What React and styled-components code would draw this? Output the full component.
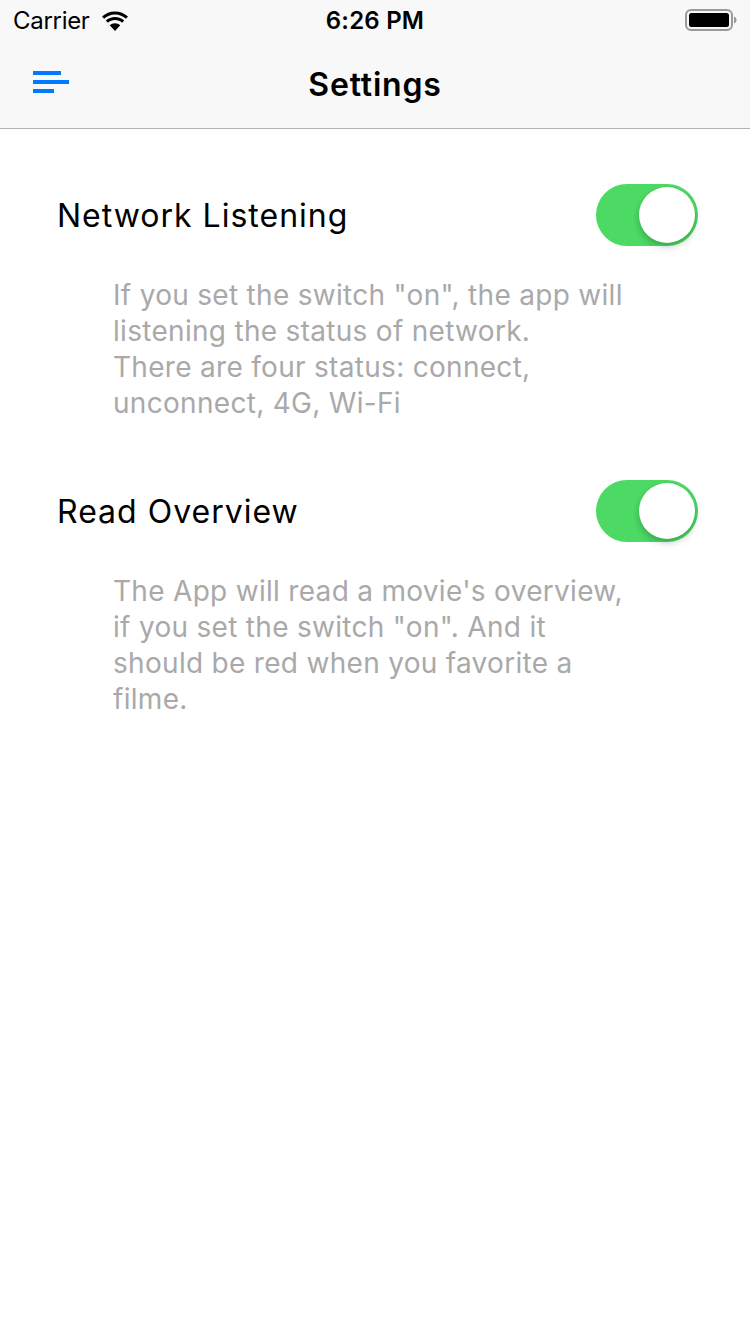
import React, { useState } from "react";
import styled, { createGlobalStyle } from "styled-components";

const Global = createGlobalStyle`
  html, body { margin: 0; padding: 0; background: #ffffff; }
  body { font-family: Inter, "Noto Sans", sans-serif; -webkit-font-smoothing: antialiased; }
  * { box-sizing: border-box; }
`;

const Page = styled.div`
  width: 750px;
  min-height: 1334px;
  background: #ffffff;
  display: flex;
  flex-direction: column;
`;

const Header = styled.header`
  background: #f8f8f8;
  border-bottom: 1px solid #b2b2b2;
  display: flex;
  flex-direction: column;
`;

const StatusBar = styled.div`
  height: 40px;
  display: grid;
  grid-template-columns: 1fr auto 1fr;
  align-items: center;
  padding: 0 13px;
  color: #000;
`;

const StatusLeft = styled.div`
  display: flex;
  align-items: center;
  gap: 11px;
  font-size: 24px;
  letter-spacing: -0.3px;
`;

const StatusTime = styled.div`
  font-size: 24px;
  font-weight: 600;
  letter-spacing: 0.2px;
`;

const StatusRight = styled.div`
  display: flex;
  justify-content: flex-end;
`;

const NavBar = styled.div`
  height: 88px;
  position: relative;
  display: flex;
  align-items: center;
  justify-content: center;
`;

const MenuButton = styled.button`
  position: absolute;
  left: 33px;
  top: 31px;
  width: 40px;
  height: 26px;
  padding: 0;
  border: 0;
  background: none;
  display: flex;
  flex-direction: column;
  gap: 5px;
  cursor: pointer;
`;

const Bar = styled.span`
  display: block;
  height: 4px;
  width: ${(p) => p.$w}px;
  background: #007aff;
`;

const Title = styled.h1`
  margin: 0;
  font-size: 32px;
  font-weight: 600;
  color: #000;
  letter-spacing: 0.8px;
`;

const Content = styled.main`
  display: flex;
  flex-direction: column;
  gap: 59px;
  padding: 55px 52px 0 57px;
`;

const Section = styled.section`
  display: flex;
  flex-direction: column;
  gap: 31px;
`;

const Row = styled.div`
  display: flex;
  align-items: center;
  justify-content: space-between;
  height: 62px;
`;

const Label = styled.span`
  font-size: 32px;
  color: #000;
  letter-spacing: 1px;
`;

const Track = styled.button`
  width: 102px;
  height: 62px;
  border-radius: 31px;
  border: 0;
  padding: 3px;
  background: ${(p) => (p.$on ? "#4cd964" : "#e5e5e5")};
  display: flex;
  justify-content: ${(p) => (p.$on ? "flex-end" : "flex-start")};
  align-items: center;
  cursor: pointer;
`;

const Knob = styled.span`
  width: 56px;
  height: 56px;
  border-radius: 50%;
  background: #fff;
  box-shadow: 0 3px 6px rgba(0, 0, 0, 0.18), 0 6px 10px rgba(0, 0, 0, 0.06);
`;

const Desc = styled.p`
  margin: 0;
  padding-left: 56px;
  max-width: 580px;
  font-size: 28px;
  line-height: 36px;
  color: #a9a9a9;
  letter-spacing: 0.3px;
`;

function Wifi() {
  return (
    <svg width="28" height="21" viewBox="0 0 28 21">
      <path d="M14 4.5c-4.2 0-8 1.6-10.9 4.3L1 6.6C4.5 3.4 9 1.5 14 1.5s9.5 1.9 13 5.1l-2.1 2.2C22 6.1 18.2 4.5 14 4.5z" fill="#000" />
      <path d="M14 10c-2.7 0-5.2 1-7.1 2.8L4.8 10.6C7.2 8.4 10.4 7 14 7s6.8 1.4 9.2 3.6l-2.1 2.2C19.2 11 16.7 10 14 10z" fill="#000" />
      <path d="M14 13.2c-2 0-3.9.8-5.3 2.1L14 21l5.3-5.7c-1.4-1.3-3.3-2.1-5.3-2.1z" fill="#000" />
    </svg>
  );
}

function Battery() {
  return (
    <svg width="52" height="22" viewBox="0 0 52 22">
      <rect x="1" y="1" width="46" height="20" rx="5" fill="none" stroke="#9a9a9a" strokeWidth="2" />
      <rect x="4" y="4" width="40" height="14" rx="2.5" fill="#000" />
      <path d="M49 7.5c1.5 0.4 2.5 1.8 2.5 3.5s-1 3.1-2.5 3.5z" fill="#9a9a9a" />
    </svg>
  );
}

function Toggle({ on, onChange }) {
  return (
    <Track $on={on} onClick={() => onChange(!on)} aria-pressed={on}>
      <Knob />
    </Track>
  );
}

export default function App() {
  const [net, setNet] = useState(true);
  const [read, setRead] = useState(true);
  return (
    <Page>
      <Global />
      <Header>
        <StatusBar>
          <StatusLeft>
            Carrier
            <Wifi />
          </StatusLeft>
          <StatusTime>6:26 PM</StatusTime>
          <StatusRight>
            <Battery />
          </StatusRight>
        </StatusBar>
        <NavBar>
          <MenuButton aria-label="Menu">
            <Bar $w={28} />
            <Bar $w={36} />
            <Bar $w={21} />
          </MenuButton>
          <Title>Settings</Title>
        </NavBar>
      </Header>
      <Content>
        <Section>
          <Row>
            <Label>Network Listening</Label>
            <Toggle on={net} onChange={setNet} />
          </Row>
          <Desc>
            If you set the switch "on", the app will listening the status of network.
            <br />
            There are four status: connect, unconnect, 4G, Wi-Fi
          </Desc>
        </Section>
        <Section>
          <Row>
            <Label>Read Overview</Label>
            <Toggle on={read} onChange={setRead} />
          </Row>
          <Desc>
            The App will read a movie's overview, if you set the switch "on". And it should be red when you favorite a filme.
          </Desc>
        </Section>
      </Content>
    </Page>
  );
}
